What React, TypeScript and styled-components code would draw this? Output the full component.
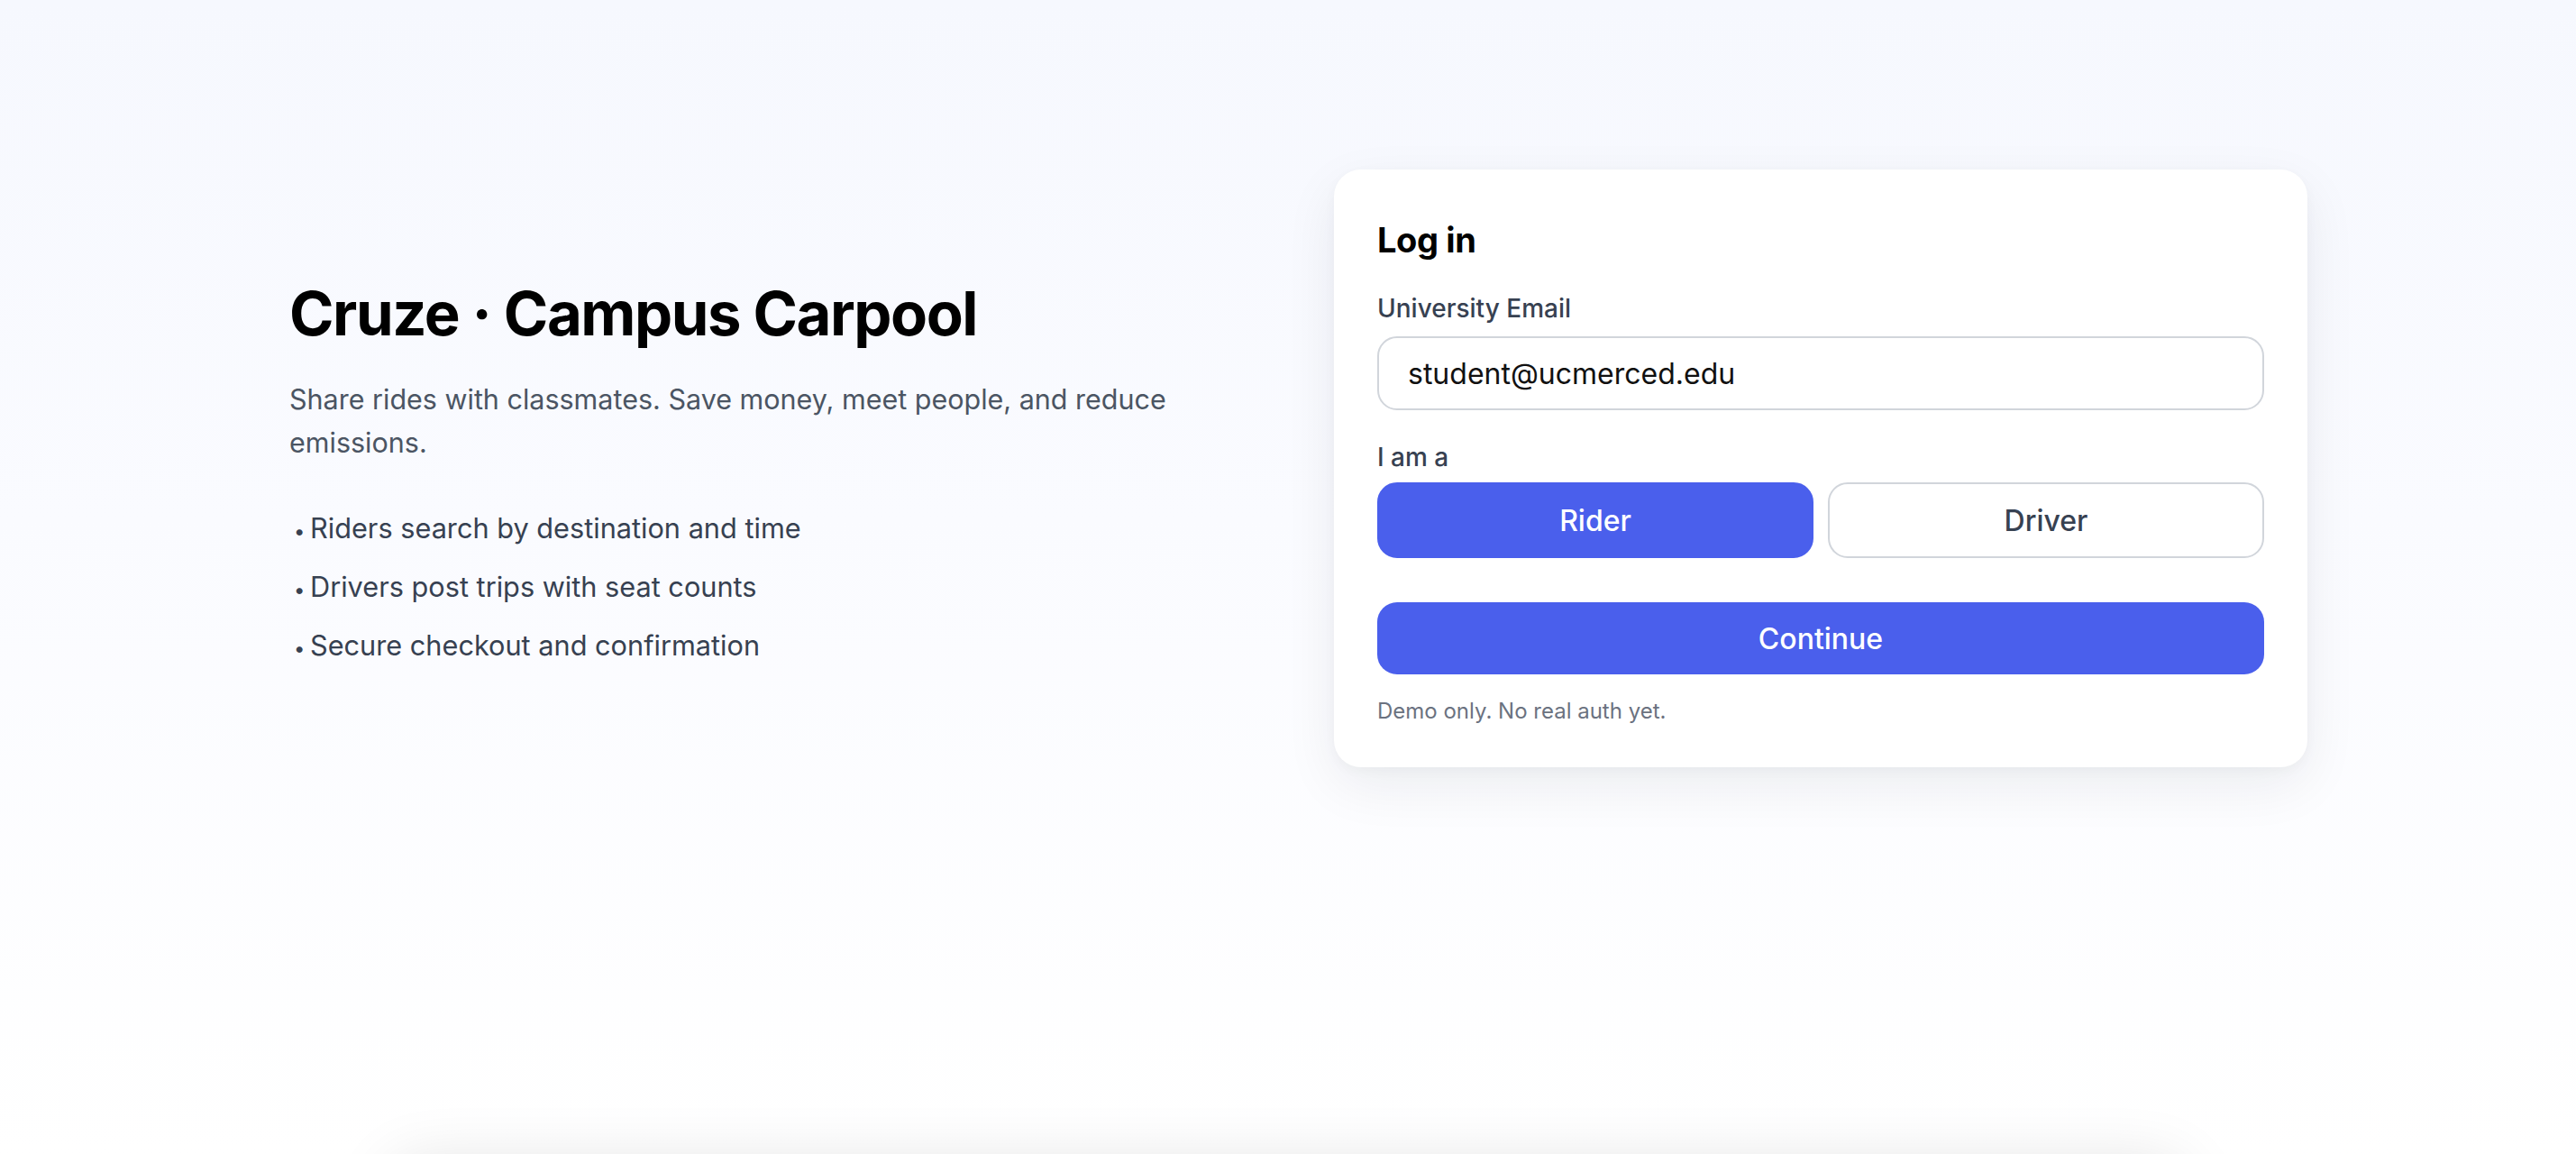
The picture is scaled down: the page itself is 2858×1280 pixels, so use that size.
import React, { useState } from "react";
import styled, { createGlobalStyle } from "styled-components";

const GlobalStyle = createGlobalStyle`
  * { box-sizing: border-box; }
  html, body {
    margin: 0;
    padding: 0;
    height: 1280px;
    overflow: hidden;
  }
  body {
    font-family: Inter, "Noto Sans", "Liberation Sans", sans-serif;
    -webkit-font-smoothing: antialiased;
  }
`;

const Page = styled.div`
  height: 1280px;
  overflow: hidden;
  background: linear-gradient(180deg, #f6f8fe 0%, #fafbff 45%, #ffffff 100%);
`;

const Hero = styled.section`
  display: grid;
  grid-template-columns: 1fr 1080px;
  column-gap: 120px;
  align-items: center;
  padding: 188px 298px 0 321px;
`;

const Intro = styled.div`
  display: flex;
  flex-direction: column;
  max-width: 1010px;
  padding-top: 16px;
`;

const Title = styled.h1`
  margin: 0;
  font-size: 67px;
  line-height: 1.1;
  font-weight: 700;
  letter-spacing: -0.022em;
  color: #000000;
`;

const Lead = styled.p`
  margin: 34px 0 0;
  font-size: 30.5px;
  line-height: 48px;
  color: #4b5563;
`;

const Features = styled.ul`
  list-style: none;
  margin: 46px 0 0;
  padding: 0;
  display: flex;
  flex-direction: column;
  gap: 12px;
`;

const Feature = styled.li`
  font-size: 30.7px;
  line-height: 50px;
  color: #374151;
  &::before {
    content: "•";
    display: inline-block;
    width: 18px;
    padding-left: 5px;
    font-size: 22px;
  }
`;

const Card = styled.div`
  background: #ffffff;
  border-radius: 30px;
  padding: 55px 48px 45px;
  box-shadow: 0 20px 60px rgba(17, 24, 39, 0.07), 0 4px 14px rgba(17, 24, 39, 0.03);
  display: flex;
  flex-direction: column;
`;

const CardTitle = styled.h2`
  margin: 0;
  font-size: 38px;
  line-height: 46px;
  font-weight: 700;
  color: #000000;
  letter-spacing: -0.01em;
`;

const Field = styled.div<{ $top: number }>`
  display: flex;
  flex-direction: column;
  margin-top: ${(p) => p.$top}px;
`;

const Label = styled.label<{ $gap: number }>`
  font-size: 28px;
  line-height: 39px;
  font-weight: 500;
  color: #374151;
  margin-bottom: ${(p) => p.$gap}px;
`;

const Input = styled.input`
  height: 82px;
  border: 2px solid #d1d5db;
  border-radius: 22px;
  padding: 0 32px;
  font-family: inherit;
  font-size: 32px;
  color: #111111;
  background: #ffffff;
  outline: none;
`;

const RoleRow = styled.div`
  display: grid;
  grid-template-columns: 1fr 1fr;
  gap: 16px;
`;

const RoleButton = styled.button<{ $active: boolean }>`
  height: 84px;
  border-radius: 22px;
  font-family: inherit;
  font-size: 32px;
  font-weight: 500;
  cursor: pointer;
  border: 2px solid ${(p) => (p.$active ? "#4a5fec" : "#d1d5db")};
  background: ${(p) => (p.$active ? "#4a5fec" : "#ffffff")};
  color: ${(p) => (p.$active ? "#ffffff" : "#374151")};
`;

const PrimaryButton = styled.button`
  margin-top: 49px;
  height: 80px;
  border: none;
  border-radius: 22px;
  background: #4a5fec;
  color: #ffffff;
  font-family: inherit;
  font-size: 32px;
  font-weight: 500;
  cursor: pointer;
`;

const Note = styled.p`
  margin: 24px 0 0;
  font-size: 24px;
  line-height: 34px;
  color: #6b7280;
`;

const NextPanel = styled.div`
  width: 1990px;
  height: 400px;
  margin: 440px auto 0;
  background: #ffffff;
  border-radius: 30px;
  box-shadow: 0 0 70px rgba(0, 0, 0, 0.12);
`;

export default function App() {
  const [role, setRole] = useState<"rider" | "driver">("rider");
  const [email, setEmail] = useState("student@ucmerced.edu");
  return (
    <>
      <GlobalStyle />
      <Page>
        <Hero>
          <Intro>
            <Title>Cruze · Campus Carpool</Title>
            <Lead>
              Share rides with classmates. Save money, meet people, and reduce emissions.
            </Lead>
            <Features>
              <Feature>Riders search by destination and time</Feature>
              <Feature>Drivers post trips with seat counts</Feature>
              <Feature>Secure checkout and confirmation</Feature>
            </Features>
          </Intro>
          <Card>
            <CardTitle>Log in</CardTitle>
            <Field $top={34}>
              <Label htmlFor="email" $gap={11}>University Email</Label>
              <Input id="email" value={email} onChange={(e) => setEmail(e.target.value)} />
            </Field>
            <Field $top={33}>
              <Label $gap={8}>I am a</Label>
              <RoleRow>
                <RoleButton $active={role === "rider"} onClick={() => setRole("rider")}>
                  Rider
                </RoleButton>
                <RoleButton $active={role === "driver"} onClick={() => setRole("driver")}>
                  Driver
                </RoleButton>
              </RoleRow>
            </Field>
            <PrimaryButton>Continue</PrimaryButton>
            <Note>Demo only. No real auth yet.</Note>
          </Card>
        </Hero>
        <NextPanel />
      </Page>
    </>
  );
}
